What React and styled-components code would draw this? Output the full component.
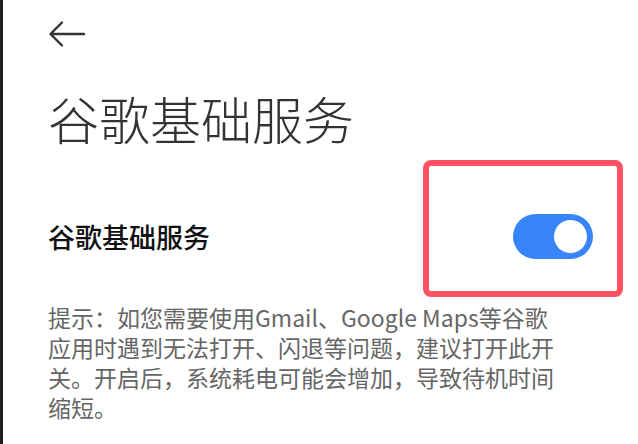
import React from "react";
import styled, { createGlobalStyle } from "styled-components";

const Global = createGlobalStyle`
  html, body { margin: 0; padding: 0; background: #fff; }
  body { font-family: "Noto Sans CJK SC", "Noto Sans", sans-serif; }
  * { box-sizing: border-box; }
`;

const Page = styled.div`
  width: 638px;
  height: 444px;
  overflow: hidden;
  border-left: 3px solid #1f1f1f;
  padding: 0 45px;
  display: flex;
  flex-direction: column;
`;

const Header = styled.div`
  height: 68px;
  display: flex;
  align-items: center;
`;

const BackButton = styled.button`
  border: 0;
  background: none;
  padding: 0;
  width: 38px;
  height: 28px;
  display: flex;
  align-items: center;
  color: #333;
`;

const Title = styled.h1`
  margin: 20px 0 0;
  height: 60px;
  line-height: 60px;
  font-size: 51px;
  font-weight: 300;
  color: #333;
`;

const Row = styled.div`
  margin-top: 48px;
  height: 80px;
  display: flex;
  align-items: center;
  justify-content: space-between;
`;

const Label = styled.span`
  font-size: 27px;
  font-weight: 500;
  color: #111;
`;

const ToggleWrap = styled.div`
  position: relative;
`;

const Toggle = styled.div`
  width: 80px;
  height: 45px;
  border-radius: 23px;
  background: ${(p) => (p.$on ? "#3784fb" : "#ccc")};
  display: flex;
  align-items: center;
  justify-content: ${(p) => (p.$on ? "flex-end" : "flex-start")};
  padding: 0 6px;
`;

const Knob = styled.div`
  width: 33px;
  height: 33px;
  border-radius: 50%;
  background: #fff;
`;

const Highlight = styled.div`
  position: absolute;
  left: -90px;
  top: -54px;
  right: -30px;
  bottom: -38px;
  border: 6px solid #ff5162;
  border-radius: 8px;
  pointer-events: none;
`;

const Hint = styled.div`
  margin-top: 26px;
  font-size: 23px;
  color: #666;
  font-weight: 400;
`;

const HintLine = styled.div`
  height: 30px;
  line-height: 30px;
  white-space: nowrap;
`;

const hintLines = [
  "提示：如您需要使用Gmail、Google Maps等谷歌",
  "应用时遇到无法打开、闪退等问题，建议打开此开",
  "关。开启后，系统耗电可能会增加，导致待机时间",
  "缩短。",
];

export default function App() {
  return (
    <>
      <Global />
      <Page>
        <Header>
          <BackButton aria-label="返回">
            <svg width="38" height="28" viewBox="0 0 38 28" fill="none">
              <path
                d="M36 14H3M14 2.5L2.5 14L14 25.5"
                stroke="#333"
                strokeWidth="2.4"
                strokeLinecap="round"
                strokeLinejoin="round"
              />
            </svg>
          </BackButton>
        </Header>
        <Title>谷歌基础服务</Title>
        <Row>
          <Label>谷歌基础服务</Label>
          <ToggleWrap>
            <Toggle $on>
              <Knob />
            </Toggle>
            <Highlight />
          </ToggleWrap>
        </Row>
        <Hint>
          {hintLines.map((t) => (
            <HintLine key={t}>{t}</HintLine>
          ))}
        </Hint>
      </Page>
    </>
  );
}
